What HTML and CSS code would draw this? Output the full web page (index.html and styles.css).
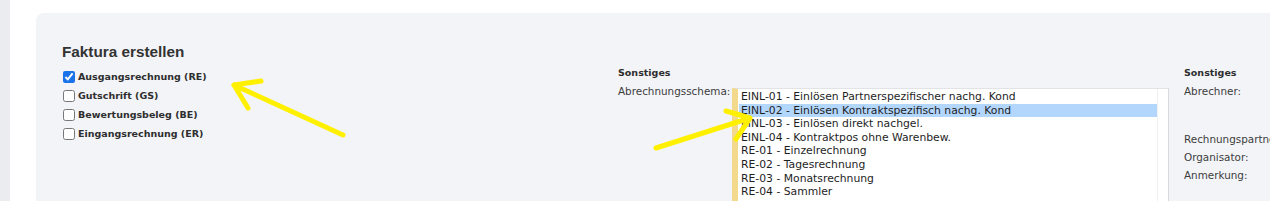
FILE: index.html
```html
<!DOCTYPE html>
<html lang="de">
<head>
  <meta charset="UTF-8" />
  <title>Faktura erstellen</title>
  <link rel="stylesheet" href="styles.css">
</head>
<body>

<div class="app">
  <aside class="rail"></aside>

  <main class="main">
    <section class="card">

      <div class="col col-type">
        <h2 class="card-title">Faktura erstellen</h2>
        <label class="check"><input type="checkbox" checked> Ausgangsrechnung (RE)</label>
        <label class="check"><input type="checkbox"> Gutschrift (GS)</label>
        <label class="check"><input type="checkbox"> Bewertungsbeleg (BE)</label>
        <label class="check"><input type="checkbox"> Eingangsrechnung (ER)</label>
      </div>

      <div class="col col-schema">
        <h3 class="col-title">Sonstiges</h3>
        <div class="field">
          <span class="field-label">Abrechnungsschema:</span>
          <div class="listbox">
            <ul class="listbox-items">
              <li class="listbox-item">EINL-01 - Einlösen Partnerspezifischer nachg. Kond</li>
              <li class="listbox-item selected">EINL-02 - Einlösen Kontraktspezifisch nachg. Kond</li>
              <li class="listbox-item">EINL-03 - Einlösen direkt nachgel.</li>
              <li class="listbox-item">EINL-04 - Kontraktpos ohne Warenbew.</li>
              <li class="listbox-item">RE-01 - Einzelrechnung</li>
              <li class="listbox-item">RE-02 - Tagesrechnung</li>
              <li class="listbox-item">RE-03 - Monatsrechnung</li>
              <li class="listbox-item">RE-04 - Sammler</li>
              <li class="listbox-item">RE-05 - Warenrechnung</li>
              <li class="listbox-item">RE-06 - Sonderrechnung</li>
            </ul>
            <div class="listbox-scroll"></div>
          </div>
        </div>
      </div>

      <div class="col col-misc">
        <h3 class="col-title">Sonstiges</h3>
        <div class="misc-row">Abrechner:</div>
        <div class="misc-row misc-gap">Rechnungspartner:</div>
        <div class="misc-row">Organisator:</div>
        <div class="misc-row">Anmerkung:</div>
      </div>

    </section>
  </main>
</div>

<!-- Markierungen (gelbe Pfeile) -->
<svg class="annotations" width="1270" height="201" viewBox="0 0 1270 201">
  <g fill="none" stroke="#fff000" stroke-width="5" stroke-linecap="round" stroke-linejoin="round">
    <path d="M343 135 L234 85 M234 85 L261 81 M234 85 L248 108" />
    <path d="M656 148 L750 118 M726 111 L750 118 M736 139 L750 118" />
  </g>
</svg>

</body>
</html>
```

FILE: styles.css
```css
html, body {
  margin: 0;
  height: 201px;
  overflow: hidden;
  background: #ffffff;
}

body {
  position: relative;
  font-family: "DejaVu Sans", Verdana, sans-serif;
  color: #333;
}

.app {
  display: flex;
  min-height: 201px;
}

.rail {
  width: 10px;
  flex-shrink: 0;
  background: #ebecf0;
}

.main {
  flex: 1;
  padding: 13px 0 0 26px;
}

.card {
  display: grid;
  grid-template-columns: 556px 566px 300px;
  width: 1400px;
  min-height: 300px;
  padding: 30px 0 0 26px;
  background: #f3f4f8;
  border-radius: 8px;
}

/* linke Spalte */
.card-title {
  margin: 0 0 6px;
  font-family: "Liberation Sans", Arial, sans-serif;
  font-size: 15.3px;
  line-height: 18px;
  font-weight: bold;
  color: #333;
}

.check {
  display: flex;
  align-items: center;
  height: 19px;
  font-size: 9.5px;
  font-weight: bold;
  color: #2e2e2e;
}

.check input {
  width: 12px;
  height: 12px;
  margin: 0 3px 0 1px;
  accent-color: #1a73e8;
}

/* mittlere / rechte Spalte */
.col-schema,
.col-misc {
  padding-top: 21px;
}

.col-title {
  margin: 0;
  font-size: 9.5px;
  line-height: 18px;
  font-weight: bold;
  color: #2e2e2e;
}

.field {
  display: flex;
  align-items: flex-start;
}

.field-label {
  width: 114px;
  font-size: 10.4px;
  line-height: 18px;
  color: #3c3c3c;
}

.listbox {
  display: flex;
  width: 430px;
  margin-top: 6px;
  background: #fff;
  border-top: 1px solid #e2e3e6;
  border-right: 1px solid #d8d9dc;
  border-left: 6px solid #f3d98c;
}

.listbox-items {
  flex: 1;
  margin: 0;
  padding: 1px 0 0 1px;
  list-style: none;
}

.listbox-item {
  height: 13.6px;
  padding-left: 2px;
  font-size: 10.8px;
  line-height: 13.6px;
  color: #1e1e1e;
  white-space: nowrap;
}

.listbox-item.selected {
  background: #b3d6fd;
}

.listbox-scroll {
  width: 10px;
  border-left: 1px solid #f0f0f0;
}

.misc-row {
  font-size: 10.4px;
  line-height: 18px;
  color: #3c3c3c;
  white-space: nowrap;
}

.misc-gap {
  margin-top: 30px;
}

.annotations {
  position: absolute;
  top: 0;
  left: 0;
  pointer-events: none;
}
```
